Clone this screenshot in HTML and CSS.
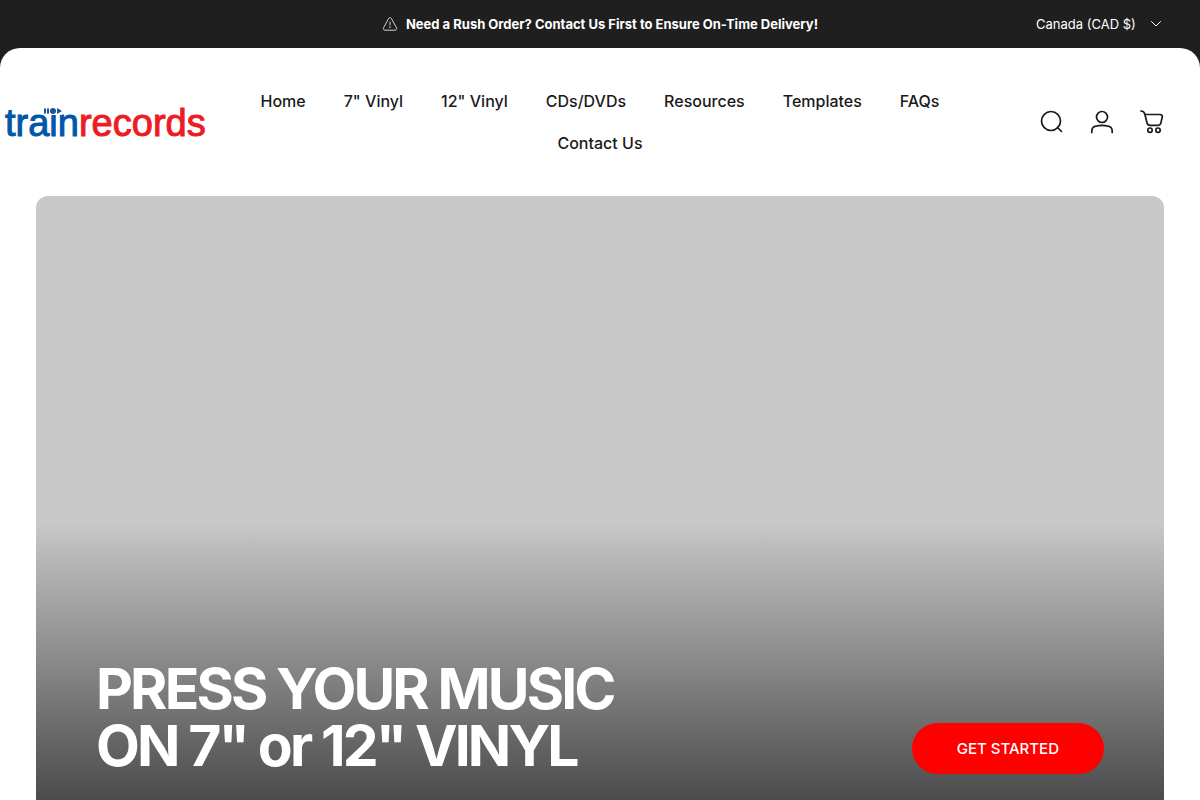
FILE: index.html
```html
<!DOCTYPE html>
<html lang="en">
<head>
  <meta charset="UTF-8">
  <meta name="viewport" content="width=device-width, initial-scale=1.0">
  <title>Train Records</title>
  <link rel="stylesheet" href="styles.css">
</head>
<body>
  <div class="topbar">
    <p class="announcement">
      <svg class="icon-alert" viewBox="0 0 16 16" aria-hidden="true">
        <path d="M6.8 2.2a1.4 1.4 0 0 1 2.4 0l5.3 9.6c.6 1-.1 2.4-1.3 2.4H2.8c-1.2 0-1.9-1.4-1.3-2.4z"/>
        <path d="M8 6v3M8 10.6v1"/>
      </svg>
      <strong>Need a Rush Order? Contact Us First to Ensure On-Time Delivery!</strong>
    </p>
    <div class="country">
      <select class="country-select" aria-label="Country/region">
        <option>Canada (CAD $)</option>
      </select>
      <svg class="icon-chevron" viewBox="0 0 12 12" aria-hidden="true"><path d="M1.5 3.5 6 8l4.500-4.500"/></svg>
    </div>
  </div>

  <div class="page">
    <header class="header">
      <a class="logo" href="#" aria-label="trainrecords">
        <span class="logo-train">tra<span class="logo-i">i<svg class="logo-mark" viewBox="0 0 18 8" aria-hidden="true">
          <path d="M0 1.500h2v5H0zM3 1.500h2v5H3zM13 1l5 3-5 3z"/>
          <circle cx="9" cy="4" r="3"/>
        </svg></span>n</span><span class="logo-records">records</span>
      </a>
      <nav class="nav" aria-label="Main">
        <a href="#">Home</a>
        <a href="#">7" Vinyl</a>
        <a href="#">12" Vinyl</a>
        <a href="#">CDs/DVDs</a>
        <a href="#">Resources</a>
        <a href="#">Templates</a>
        <a href="#">FAQs</a>
        <a href="#">Contact Us</a>
      </nav>
      <div class="actions">
        <button class="action" type="button" aria-label="Search">
          <svg viewBox="0 0 24 24"><circle cx="11" cy="11" r="9.500"/><path d="m17.500 17.500 4 4"/></svg>
        </button>
        <a class="action" href="#" aria-label="Account">
          <svg viewBox="0 0 24 24"><circle cx="12" cy="7" r="5.500"/><path d="M1.800 22.500v-1.300c0-2.600 1.500-4.500 4-5 3.600-.9 8.800-.9 12.400 0 2.500.5 4 2.400 4 5v1.300"/></svg>
        </a>
        <a class="action" href="#" aria-label="Cart">
          <svg viewBox="0 0 24 24"><path d="M.8 1c2 0 3.200.5 3.800 2.500l.3 1L7 12.800c.5 1.700 1.300 2.600 3 2.600h7.800c1.700 0 2.700-.8 3.100-2.500l1.300-5.600c.4-1.700-.4-2.800-2.200-2.800H5"/><circle cx="10" cy="20.200" r="2.200"/><circle cx="18" cy="20.200" r="2.200"/></svg>
        </a>
      </div>
    </header>

    <main>
      <section class="hero">
        <h1 class="hero-title">PRESS YOUR MUSIC<br>ON 7" or 12" VINYL</h1>
        <a class="hero-button" href="#">GET STARTED</a>
      </section>
    </main>
  </div>
</body>
</html>
```
FILE: styles.css
```css
* {
  box-sizing: border-box;
}
body {
  margin: 0;
  background-color: #1f1f1f;
  color: #1a1a1a;
  font-family: Inter, sans-serif;
  font-size: 16px;
}
a {
  color: inherit;
  text-decoration: none;
}
svg {
  display: block;
  fill: none;
  stroke: currentColor;
  stroke-linecap: round;
  stroke-linejoin: round;
}

/* top bar */
.topbar {
  display: grid;
  grid-template-columns: 1fr auto 1fr;
  align-items: center;
  height: 48px;
  padding: 0 36px;
  color: #fff;
  font-size: 13px;
}
.announcement {
  grid-column: 2;
  display: flex;
  align-items: center;
  gap: 8px;
  margin: 0;
}
.icon-alert {
  width: 16px;
  height: 16px;
  opacity: 0.8;
}
.country {
  position: relative;
  justify-self: end;
}
.country-select {
  appearance: none;
  margin: 0;
  padding: 4px 28px 4px 0;
  border: 0;
  background: transparent;
  color: inherit;
  font: inherit;
  cursor: pointer;
}
.country-select option {
  color: #1a1a1a;
}
.icon-chevron {
  position: absolute;
  top: 50%;
  right: 2px;
  width: 12px;
  height: 12px;
  transform: translateY(-50%);
  pointer-events: none;
}

/* header */
.page {
  border-radius: 20px 20px 0 0;
  background-color: #fff;
  padding-bottom: 36px;
}
.header {
  display: grid;
  grid-template-columns: 230px 1fr 230px;
  align-items: center;
  padding: 32px 0;
}
.logo {
  padding: 2px 0 0 5px;
  font-family: "Liberation Sans", Arial, sans-serif;
  font-size: 38px;
  line-height: 42px;
  -webkit-text-stroke: 1px currentColor;
}
.logo-train {
  color: #0057a8;
}
.logo-records {
  color: #ed1c24;
}
.logo-i {
  position: relative;
}
.logo-mark {
  position: absolute;
  top: 5px;
  left: -5px;
  width: 18px;
  height: 8px;
  background-color: #fff;
  fill: #1b4f9c;
  stroke: none;
}
.nav {
  display: flex;
  flex-wrap: wrap;
  justify-content: center;
}
.nav a {
  padding: 0 19px;
  font-weight: 500;
  line-height: 42px;
}
.actions {
  display: flex;
  justify-content: flex-end;
  gap: 26px;
  padding-right: 36px;
}
.action {
  padding: 0;
  border: 0;
  background: none;
  color: inherit;
  cursor: pointer;
}
.action svg {
  width: 24px;
  height: 24px;
  stroke-width: 1.7;
}

/* hero */
.hero {
  display: flex;
  align-items: flex-end;
  justify-content: space-between;
  gap: 40px;
  min-height: 638px;
  margin: 0 36px;
  padding: 60px;
  border-radius: 12px;
  background: linear-gradient(rgba(0, 0, 0, 0) 51%, rgba(0, 0, 0, 0.7)) #c8c8c8;
  color: #fff;
}
.hero-title {
  margin: 0;
  font-size: 57px;
  font-weight: 700;
  line-height: 57px;
  letter-spacing: -0.05em;
}
.hero-button {
  padding: 0 45px;
  border-radius: 26px;
  background-color: #f00;
  font-size: 15px;
  font-weight: 500;
  line-height: 51px;
  white-space: nowrap;
}
```
